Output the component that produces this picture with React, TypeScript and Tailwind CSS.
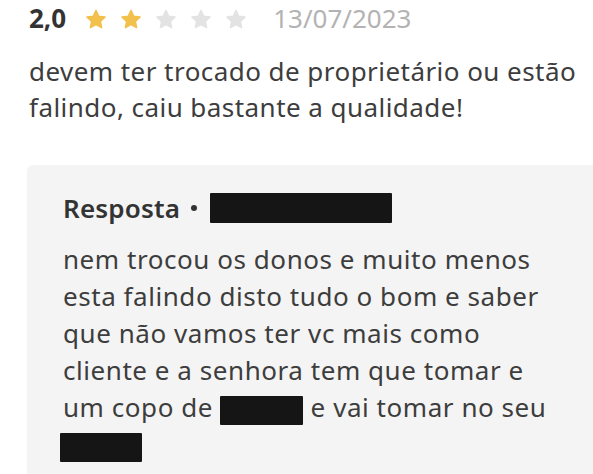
import React from 'react';

const Star = ({ filled }: { filled: boolean }) => (
  <svg width="24" height="23" viewBox="0 0 24 24" className="shrink-0">
    <path
      d="M12 2.5l2.9 6.1 6.6.8-4.9 4.6 1.3 6.6L12 17.3l-5.9 3.3 1.3-6.6-4.9-4.6 6.6-.8z"
      fill={filled ? '#f2c04c' : '#e3e3e3'}
      stroke={filled ? '#f2c04c' : '#e3e3e3'}
      strokeWidth="1.5"
      strokeLinejoin="round"
    />
  </svg>
);

const Redacted = ({ w }: { w: number }) => (
  <span
    className="inline-block h-[29px] bg-[#151515] align-middle rounded-[1px]"
    style={{ width: w }}
  />
);

const reply = [
  'nem trocou os donos e muito menos',
  'esta falindo disto tudo o bom e saber',
  'que não vamos ter vc mais como',
  'cliente e a senhora tem que tomar e',
];

export default function App() {
  return (
    <div
      className="w-[593px] h-[474px] overflow-hidden bg-white pl-[29px] text-[#3d3d3d]"
      style={{ fontFamily: '"Noto Sans", "Open Sans", sans-serif' }}
    >
      {/* rating row */}
      <div className="flex items-center h-[36px]">
        <span className="text-[26px] leading-[36px] font-bold text-[#333]">2,0</span>
        <div className="flex items-center gap-[11px] ml-[18px] mt-[2px]">
          <Star filled />
          <Star filled />
          <Star filled={false} />
          <Star filled={false} />
          <Star filled={false} />
        </div>
        <span className="ml-[25px] text-[26px] leading-[36px] text-[#b3b3b3]">13/07/2023</span>
      </div>

      <p className="mt-[17px] text-[26px] leading-[36px] tracking-[0.45px]">
        devem ter trocado de proprietário ou estão
        <br />
        falindo, caiu bastante a qualidade!
      </p>

      {/* reply box */}
      <div className="mt-[40px] -ml-[2px] bg-[#f4f4f4] rounded-tl-[6px] pl-[36px] pt-[24px] pb-[20px]">
        <div className="flex items-center h-[38px] text-[26px] leading-[38px] font-semibold text-[#333]">
          <span className="tracking-[0.2px]">Resposta</span>
          <span className="ml-[11px] w-[6px] h-[6px] rounded-full bg-[#333]" />
          <span className="ml-[13px] inline-block w-[182px] h-[30px] bg-[#151515] rounded-[1px]" />
        </div>
        <div className="mt-[14px] text-[26px] leading-[37px] tracking-[0.55px]">
          {reply.map((l) => (
            <div key={l}>{l}</div>
          ))}
          <div>
            um copo de <Redacted w={83} /> e vai tomar no seu
          </div>
          <div className="-ml-[3px]">
            <Redacted w={82} />
          </div>
        </div>
      </div>
    </div>
  );
}
